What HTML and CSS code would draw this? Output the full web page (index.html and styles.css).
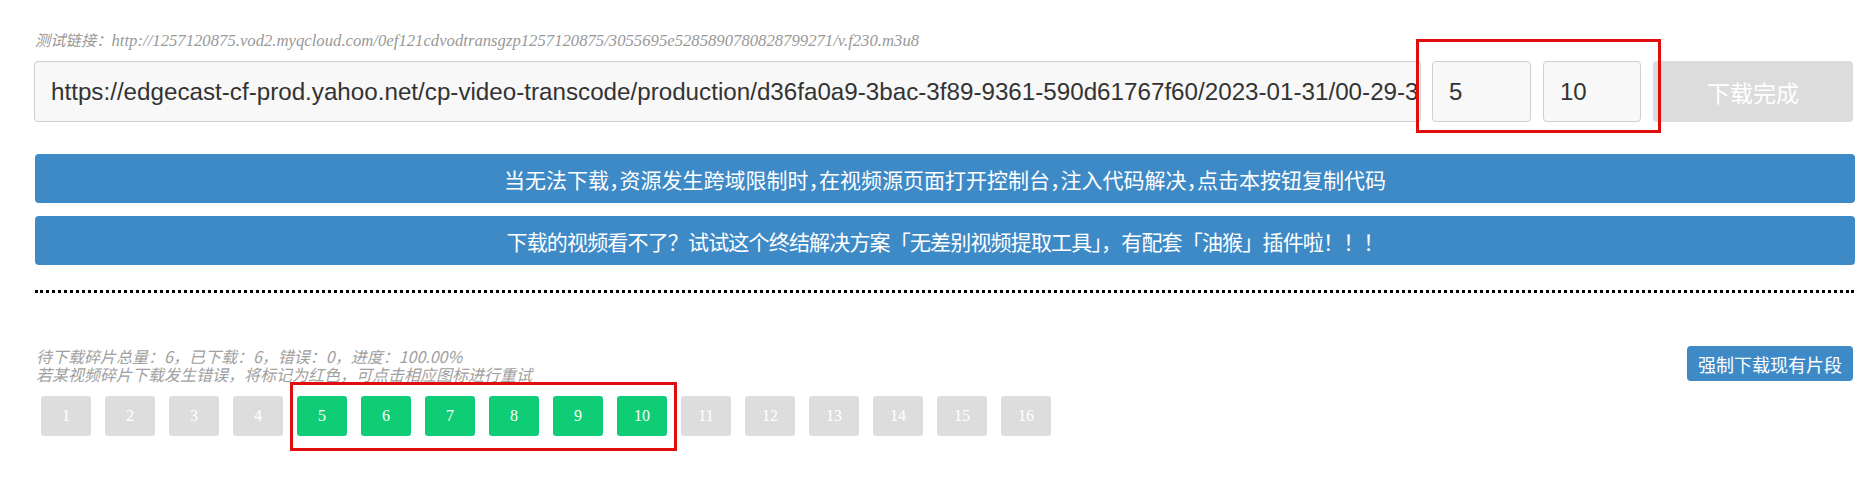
FILE: index.html
```html
<!DOCTYPE html>
<html lang="zh-CN">
<head>
<meta charset="utf-8">
<title>m3u8 下载</title>
<link rel="stylesheet" href="styles.css">
</head>
<body>
<div class="page">
  <p class="hint">测试链接：<span class="hint-url">http://1257120875.vod2.myqcloud.com/0ef121cdvodtransgzp1257120875/3055695e5285890780828799271/v.f230.m3u8</span></p>

  <div class="input-row">
    <input class="url" type="text" value="https://edgecast-cf-prod.yahoo.net/cp-video-transcode/production/d36fa0a9-3bac-3f89-9361-590d61767f60/2023-01-31/00-29-32/index.m3u8">
    <div class="range">
      <input class="num num-start" type="text" value="5">
      <input class="num num-end" type="text" value="10">
      <span class="annot annot-range"></span>
    </div>
    <button class="done" type="button">下载完成</button>
  </div>

  <button class="bar bar-halt" type="button">当无法下载，资源发生跨域限制时，在视频源页面打开控制台，注入代码解决，点击本按钮复制代码</button>
  <button class="bar bar-tight" type="button">下载的视频看不了？试试这个终结解决方案「无差别视频提取工具」，有配套「油猴」插件啦！！！</button>

  <hr class="dots">

  <div class="progress">
    <div class="progress-head">
      <div class="info">
        <div>待下载碎片总量：6，已下载：6，错误：0，进度：100.00%</div>
        <div>若某视频碎片下载发生错误，将标记为红色，可点击相应图标进行重试</div>
      </div>
      <button class="force" type="button">强制下载现有片段</button>
    </div>
    <div class="chips">
      <span class="chip">1</span>
      <span class="chip">2</span>
      <span class="chip">3</span>
      <span class="chip">4</span>
      <span class="chip done-chip">5</span>
      <span class="chip done-chip">6</span>
      <span class="chip done-chip">7</span>
      <span class="chip done-chip">8</span>
      <span class="chip done-chip">9</span>
      <span class="chip done-chip">10</span>
      <span class="chip">11</span>
      <span class="chip">12</span>
      <span class="chip">13</span>
      <span class="chip">14</span>
      <span class="chip">15</span>
      <span class="chip">16</span>
      <span class="annot annot-chips"></span>
    </div>
  </div>
</div>
</body>
</html>
```

FILE: styles.css
```css
* { box-sizing: border-box; }

html, body {
  margin: 0;
  padding: 0;
  background: #ffffff;
}

body {
  font-family: "Liberation Sans", "Noto Sans CJK SC", sans-serif;
  color: #333;
}

.page {
  width: 1854px;
  padding: 29px 0 40px 34px;
}

.hint {
  margin: 0 0 10px 1px;
  font-size: 15.3px;
  line-height: 20px;
  color: #999;
  font-style: italic;
  font-family: "Noto Sans CJK SC", sans-serif;
}

.hint-url {
  font-family: "Liberation Serif", serif;
  font-size: 16.7px;
}

.input-row {
  display: flex;
  align-items: stretch;
  height: 61px;
}

.url {
  flex: 0 0 1387px;
  width: 1387px;
  height: 61px;
  padding: 0 1px 0 16px;
  border: 1px solid #cfcfcf;
  border-radius: 4px;
  background: #f8f8f8;
  font-family: "Liberation Sans", sans-serif;
  font-size: 24.2px;
  color: #333;
  outline: none;
}

.range {
  position: relative;
  display: flex;
  gap: 12px;
  margin-left: 11px;
}

.num {
  width: 99px;
  height: 61px;
  padding: 0 16px;
  border: 1px solid #cfcfcf;
  border-radius: 4px;
  background: #f8f8f8;
  font-family: "Liberation Sans", sans-serif;
  font-size: 24px;
  color: #333;
  outline: none;
}

.num-end { width: 98px; }

.done {
  width: 200px;
  height: 61px;
  margin-left: 12px;
  border: none;
  border-radius: 4px;
  background: #dcdcdc;
  color: #fff;
  font-family: "Noto Sans CJK SC", sans-serif;
  font-size: 23px;
  padding: 0;
}

.annot {
  position: absolute;
  border: 3px solid #e00d0d;
  pointer-events: none;
}

.annot-range {
  left: -16px;
  right: -20px;
  top: -22px;
  bottom: -11px;
}

.bar {
  display: block;
  width: 1820px;
  height: 49px;
  margin: 32px 0 0 1px;
  border: none;
  border-radius: 4px;
  background: #3e8ac7;
  color: #fff;
  font-family: "Noto Sans CJK SC", sans-serif;
  font-size: 21px;
  padding: 0;
}

.bar + .bar {
  margin-top: 13px;
}

.bar-halt {
  font-feature-settings: "halt";
}

.bar-tight {
  letter-spacing: -0.83px;
}

.dots {
  width: 1819px;
  margin: 25px 0 0 1px;
  border: none;
  border-top: 3px dotted #000;
  height: 0;
}

.progress {
  margin-top: 53px;
}

.progress-head {
  display: flex;
  justify-content: space-between;
  align-items: flex-start;
  width: 1819px;
}

.info {
  margin: 1px 0 0 2px;
  font-family: "Noto Sans CJK SC", sans-serif;
  font-style: italic;
  font-size: 16px;
  line-height: 18px;
  color: #a0a0a0;
}

.force {
  height: 35px;
  padding: 0 11px;
  border: none;
  border-radius: 4px;
  background: #3e8ac7;
  color: #fff;
  font-family: "Noto Sans CJK SC", sans-serif;
  font-size: 18px;
}

.chips {
  position: relative;
  display: flex;
  gap: 14px;
  margin: 13px 0 0 7px;
}

.chip {
  width: 50px;
  height: 40px;
  display: flex;
  align-items: center;
  justify-content: center;
  border-radius: 3px;
  background: #dddddd;
  color: #fff;
  font-family: "Liberation Serif", serif;
  font-size: 16px;
}

.done-chip {
  background: #0fcd75;
}

.annot-chips {
  left: 249px;
  top: -14px;
  width: 387px;
  height: 69px;
}
```
